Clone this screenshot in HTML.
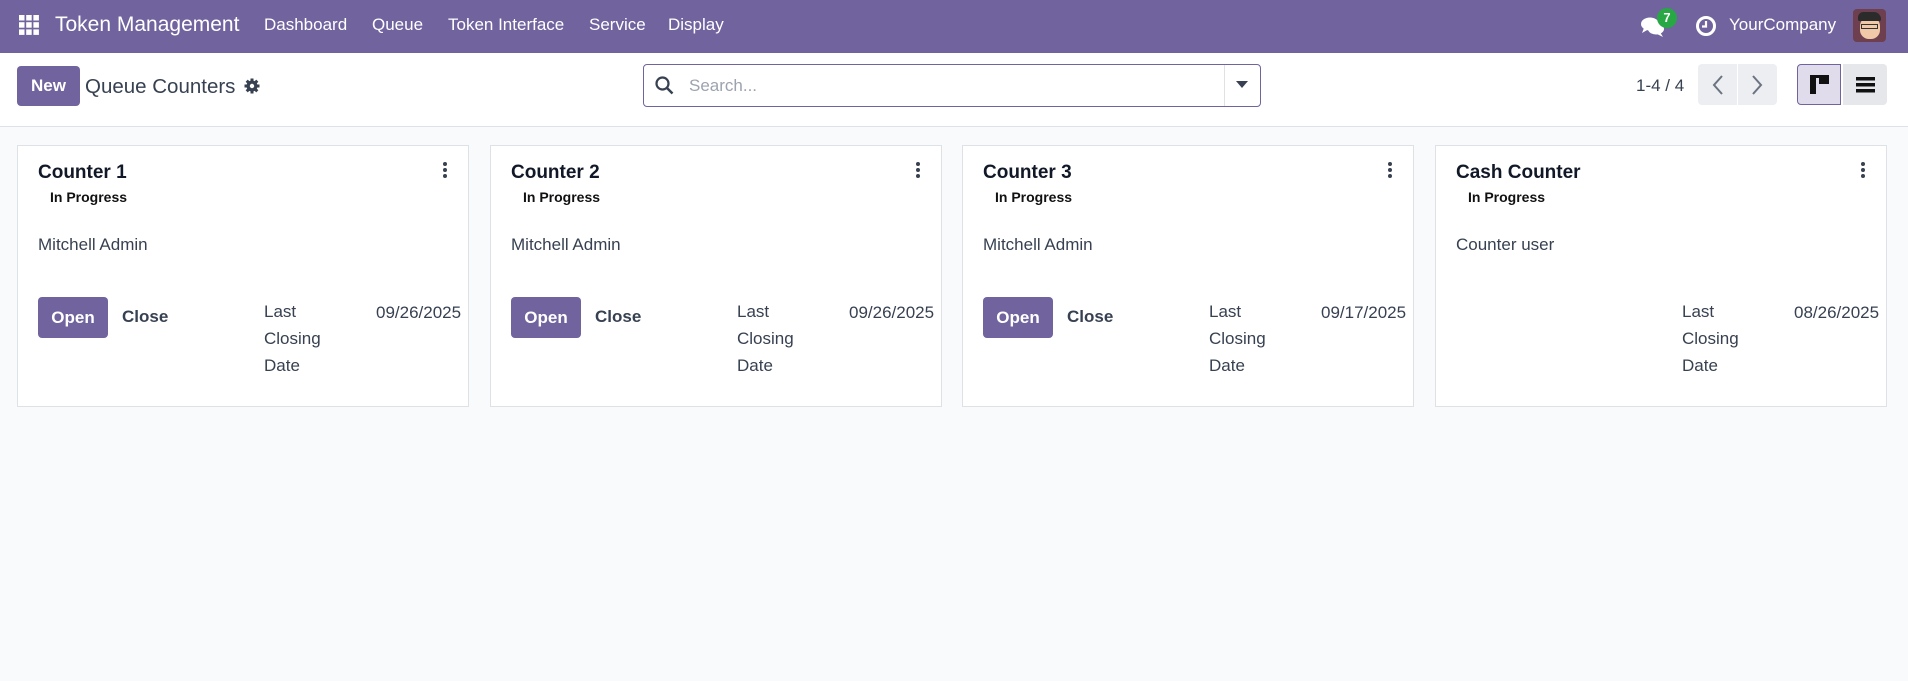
<!DOCTYPE html>
<html><head><meta charset="utf-8"><style>
*{box-sizing:border-box;margin:0;padding:0}
body{width:1908px;height:681px;overflow:hidden;background:#f9fafb;font-family:"Liberation Sans",sans-serif;color:#374151;position:relative}
.a{position:absolute;white-space:nowrap}
.nav{left:0;top:0;width:1908px;height:53px;background:#71639e}
.nl{color:#fff;font-size:17px;top:15px}
.cp{left:0;top:53px;width:1908px;height:74px;background:#fff;border-bottom:1px solid #dee2e6}
.card{top:145px;width:452px;height:262px;background:#fff;border:1px solid #dee2e6}
.card .t{left:20px;top:16px;font-size:19px;font-weight:bold;color:#111827}
.card .p{left:32px;top:43px;font-size:14px;font-weight:bold;color:#111}
.card .u{left:20px;top:89px;font-size:17px;color:#374151}
.card .o{left:20px;top:151px;width:70px;height:41px;background:#71639e;border-radius:4px;color:#fff;font-weight:bold;font-size:17px;text-align:center;line-height:41px}
.card .c{left:104px;top:161px;font-size:17px;font-weight:bold;color:#374151}
.card .l{left:246px;top:152px;font-size:17px;line-height:27px}
.card .d{left:358px;top:157px;font-size:17px}
.card .k{left:425px;top:16px;width:4px}
.card .k i{display:block;width:4px;height:4px;background:#374151;border-radius:50%;margin-bottom:2px}
</style></head><body>
<div class="a nav"></div>
<svg class="a" style="left:19px;top:15px" width="20" height="20" viewBox="0 0 20 20" fill="#fff"><rect x="0" y="0" width="5.5" height="5.5"/><rect x="7.2" y="0" width="5.5" height="5.5"/><rect x="14.4" y="0" width="5.5" height="5.5"/><rect x="0" y="7.2" width="5.5" height="5.5"/><rect x="7.2" y="7.2" width="5.5" height="5.5"/><rect x="14.4" y="7.2" width="5.5" height="5.5"/><rect x="0" y="14.4" width="5.5" height="5.5"/><rect x="7.2" y="14.4" width="5.5" height="5.5"/><rect x="14.4" y="14.4" width="5.5" height="5.5"/></svg>
<div class="a nl" style="left:55px;top:13px;font-size:21px">Token Management</div>
<div class="a nl" style="left:264px">Dashboard</div>
<div class="a nl" style="left:372px">Queue</div>
<div class="a nl" style="left:448px">Token Interface</div>
<div class="a nl" style="left:589px">Service</div>
<div class="a nl" style="left:668px">Display</div>
<svg class="a" style="left:1640px;top:16px" width="26" height="22" viewBox="0 0 26 22" fill="#fff"><ellipse cx="10" cy="8" rx="9" ry="6.5"/><path d="M4 12 L2 17 L9 13Z"/><ellipse cx="16" cy="13" rx="8" ry="5.5"/><path d="M20 16 L23 21 L15 17Z"/></svg>
<div class="a" style="left:1657px;top:8px;width:20px;height:20px;border-radius:10px;background:#28a745;color:#fff;font-size:13px;font-weight:bold;text-align:center;line-height:20px">7</div>
<svg class="a" style="left:1695px;top:15px" width="22" height="22" viewBox="0 0 22 22"><circle cx="11" cy="11" r="8.5" fill="none" stroke="#fff" stroke-width="3"/><path d="M11 6v5.5h-4" fill="none" stroke="#fff" stroke-width="2.2"/></svg>
<div class="a nl" style="left:1729px">YourCompany</div>
<div class="a" style="left:1853px;top:9px;width:33px;height:33px;border-radius:4px;background:#6d3f4f;overflow:hidden"><div style="position:absolute;left:7px;top:8px;width:20px;height:22px;background:#f2c9a8;border-radius:9px"></div><div style="position:absolute;left:5px;top:3px;width:23px;height:9px;background:#2b2b2b;border-radius:6px 8px 2px 2px"></div><div style="position:absolute;left:8px;top:15px;width:17px;height:5px;border:1.5px solid #333"></div></div>

<div class="a cp"></div>
<div class="a" style="left:17px;top:66px;width:63px;height:40px;background:#71639e;border-radius:4px;color:#fff;font-weight:bold;font-size:17px;text-align:center;line-height:40px">New</div>
<div class="a" style="left:85px;top:75px;font-size:20.5px;color:#374151">Queue Counters</div>
<svg class="a" style="left:244px;top:78px" width="16" height="16" viewBox="0 0 16 16"><circle cx="8" cy="8" r="5.5" fill="#374151"/><g stroke="#374151" stroke-width="3"><path d="M8 0.5v15M0.5 8h15M2.7 2.7l10.6 10.6M13.3 2.7L2.7 13.3"/></g><circle cx="8" cy="8" r="2.2" fill="#fff"/></svg>
<div class="a" style="left:643px;top:64px;width:618px;height:43px;border:1px solid #71639e;border-radius:4px;background:#fff"></div>
<div class="a" style="left:1224px;top:65px;width:1px;height:41px;background:#dee2e6"></div>
<svg class="a" style="left:655px;top:76px" width="19" height="19" viewBox="0 0 19 19"><circle cx="7.5" cy="7.5" r="6" fill="none" stroke="#374151" stroke-width="2.2"/><path d="M12 12l5.5 5.5" stroke="#374151" stroke-width="2.5"/></svg>
<div class="a" style="left:689px;top:76px;font-size:17px;color:#9ca3af">Search...</div>
<svg class="a" style="left:1236px;top:81px" width="12" height="8" viewBox="0 0 12 8"><path d="M0 0h12L6 7z" fill="#374151"/></svg>
<div class="a" style="left:1636px;top:76px;font-size:17px;color:#374151">1-4 / 4</div>
<div class="a" style="left:1698px;top:64px;width:39px;height:41px;background:#eceef1;border-radius:4px 0 0 4px"></div>
<div class="a" style="left:1738px;top:64px;width:39px;height:41px;background:#eceef1;border-radius:0 4px 4px 0"></div>
<svg class="a" style="left:1711px;top:74px" width="14" height="22" viewBox="0 0 14 22"><path d="M11 2L3 11l8 9" fill="none" stroke="#6b7280" stroke-width="2"/></svg>
<svg class="a" style="left:1750px;top:74px" width="14" height="22" viewBox="0 0 14 22"><path d="M3 2l8 9-8 9" fill="none" stroke="#6b7280" stroke-width="2"/></svg>
<div class="a" style="left:1797px;top:64px;width:44px;height:41px;background:#e1dcec;border:1px solid #71639e;border-radius:4px 0 0 4px"></div>
<svg class="a" style="left:1810px;top:75px" width="19" height="19" viewBox="0 0 19 19"><rect x="0" y="0" width="19" height="3" fill="#111"/><rect x="0" y="0" width="6" height="19" fill="#111"/><rect x="9" y="0" width="10" height="9" fill="#111"/></svg>
<div class="a" style="left:1843px;top:64px;width:44px;height:41px;background:#e5e7eb;border-radius:0 4px 4px 0"></div>
<svg class="a" style="left:1856px;top:77px" width="19" height="16" viewBox="0 0 19 16" fill="#111"><rect y="0" width="19" height="3.5"/><rect y="6" width="19" height="3.5"/><rect y="12" width="19" height="3.5"/></svg>

<div class="a card" style="left:17px"><div class="a t">Counter 1</div><div class="a k"><i></i><i></i><i></i></div><div class="a p">In Progress</div><div class="a u">Mitchell Admin</div><div class="a o">Open</div><div class="a c">Close</div><div class="a l">Last<br>Closing<br>Date</div><div class="a d">09/26/2025</div></div>
<div class="a card" style="left:490px"><div class="a t">Counter 2</div><div class="a k"><i></i><i></i><i></i></div><div class="a p">In Progress</div><div class="a u">Mitchell Admin</div><div class="a o">Open</div><div class="a c">Close</div><div class="a l">Last<br>Closing<br>Date</div><div class="a d">09/26/2025</div></div>
<div class="a card" style="left:962px"><div class="a t">Counter 3</div><div class="a k"><i></i><i></i><i></i></div><div class="a p">In Progress</div><div class="a u">Mitchell Admin</div><div class="a o">Open</div><div class="a c">Close</div><div class="a l">Last<br>Closing<br>Date</div><div class="a d">09/17/2025</div></div>
<div class="a card" style="left:1435px"><div class="a t">Cash Counter</div><div class="a k"><i></i><i></i><i></i></div><div class="a p">In Progress</div><div class="a u">Counter user</div><div class="a l">Last<br>Closing<br>Date</div><div class="a d">08/26/2025</div></div>
</body></html>
